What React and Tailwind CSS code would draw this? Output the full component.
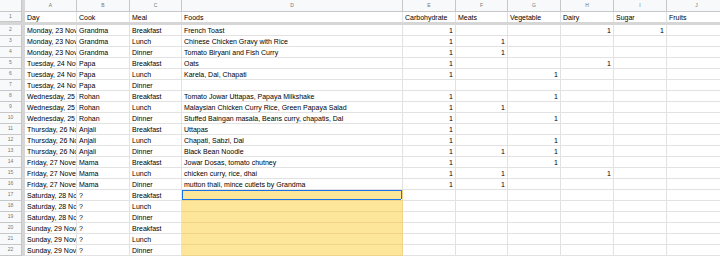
import React from "react";

const COLS = [
  { l: "A", w: 52 },
  { l: "B", w: 53 },
  { l: "C", w: 52 },
  { l: "D", w: 221 },
  { l: "E", w: 53 },
  { l: "F", w: 52 },
  { l: "G", w: 53 },
  { l: "H", w: 53 },
  { l: "I", w: 53 },
  { l: "J", w: 60 },
];

const header = ["Day", "Cook", "Meal", "Foods", "Carbohydrate", "Meats", "Vegetable", "Dairy", "Sugar", "Fruits"];

const rows = [
  ["Monday, 23 November", "Grandma", "Breakfast", "French Toast", 1, 0, 0, 1, 1, 0],
  ["Monday, 23 November", "Grandma", "Lunch", "Chinese Chicken Gravy with Rice", 1, 1, 0, 0, 0, 0],
  ["Monday, 23 November", "Grandma", "Dinner", "Tomato Biryani and Fish Curry", 1, 1, 0, 0, 0, 0],
  ["Tuesday, 24 November", "Papa", "Breakfast", "Oats", 1, 0, 0, 1, 0, 0],
  ["Tuesday, 24 November", "Papa", "Lunch", "Karela, Dal, Chapati", 1, 0, 1, 0, 0, 0],
  ["Tuesday, 24 November", "Papa", "Dinner", "", 0, 0, 0, 0, 0, 0],
  ["Wednesday, 25 November", "Rohan", "Breakfast", "Tomato Jowar Uttapas, Papaya Milkshake", 1, 0, 1, 0, 0, 1],
  ["Wednesday, 25 November", "Rohan", "Lunch", "Malaysian Chicken Curry Rice, Green Papaya Salad", 1, 1, 0, 0, 0, 1],
  ["Wednesday, 25 November", "Rohan", "Dinner", "Stuffed Baingan masala, Beans curry, chapatis, Dal", 1, 0, 1, 0, 0, 0],
  ["Thursday, 26 November", "Anjali", "Breakfast", "Uttapas", 1, 0, 0, 0, 0, 0],
  ["Thursday, 26 November", "Anjali", "Lunch", "Chapati, Sabzi, Dal", 1, 0, 1, 0, 0, 0],
  ["Thursday, 26 November", "Anjali", "Dinner", "Black Bean Noodle", 1, 1, 1, 0, 0, 0],
  ["Friday, 27 November", "Mama", "Breakfast", "Jowar Dosas, tomato chutney", 1, 0, 1, 0, 0, 0],
  ["Friday, 27 November", "Mama", "Lunch", "chicken curry, rice, dhai", 1, 1, 0, 1, 0, 0],
  ["Friday, 27 November", "Mama", "Dinner", "mutton thali, mince cutlets by Grandma", 1, 1, 0, 0, 0, 0],
  ["Saturday, 28 November", "?", "Breakfast", null],
  ["Saturday, 28 November", "?", "Lunch", null],
  ["Saturday, 28 November", "?", "Dinner", null],
  ["Sunday, 29 November", "?", "Breakfast", null],
  ["Sunday, 29 November", "?", "Lunch", null],
  ["Sunday, 29 November", "?", "Dinner", null],
];

function RowHead({ n, h }) {
  return (
    <div
      className="w-[22px] shrink-0 bg-[#f8f9fa] border-b border-r border-[#c7c7c7] flex items-center justify-center text-[5px] text-[#777]"
      style={{ height: h }}
    >
      {n}
    </div>
  );
}

function Frozen({ h }) {
  return <div className="w-[3px] shrink-0 bg-[#d6d6d6]" style={{ height: h }} />;
}

export default function App() {
  return (
    <div className="w-[720px] h-[257px] overflow-hidden bg-white font-['Liberation_Sans',Arial,sans-serif] text-black">
      {/* column header */}
      <div className="flex h-[12px]">
        <div className="w-[22px] shrink-0 h-[12px] bg-[#f8f9fa] border-b border-r border-[#c7c7c7]" />
        <Frozen h={12} />
        {COLS.map((c) => (
          <div
            key={c.l}
            className="shrink-0 h-[12px] bg-[#f8f9fa] border-b border-r border-[#c7c7c7] flex items-center justify-center text-[5px] text-[#777]"
            style={{ width: c.w }}
          >
            {c.l}
          </div>
        ))}
      </div>
      {/* row 1 */}
      <div className="flex h-[10px]">
        <RowHead n={1} h={10} />
        <Frozen h={10} />
        {header.map((t, i) => (
          <div
            key={i}
            className="shrink-0 h-[10px] border-r border-[#e2e2e2] flex items-center pl-[2px] text-[7px] leading-none whitespace-nowrap overflow-hidden"
            style={{ width: COLS[i].w }}
          >
            {t}
          </div>
        ))}
      </div>
      <div className="flex h-[3px]">
        <div className="w-[22px] shrink-0 h-[3px] bg-[#d6d6d6]" />
        <div className="flex-1 h-[3px] bg-[#d6d6d6]" />
      </div>
      {rows.map((r, ri) => {
        const rowNum = ri + 2;
        const yellow = r[3] === null;
        return (
          <div key={ri} className="flex h-[11px]">
            <RowHead n={rowNum} h={11} />
            <Frozen h={11} />
            {COLS.map((c, ci) => {
              const v = r[ci];
              const isNum = ci >= 4;
              const isD = ci === 3;
              const selected = rowNum === 17 && isD;
              return (
                <div
                  key={ci}
                  className={
                    "relative shrink-0 h-[11px] border-b border-r flex items-center text-[7px] leading-none whitespace-nowrap " +
                    (isD && yellow ? "bg-[#fde59a] border-[#f1d487] " : "border-[#e2e2e2] ") +
                    (isNum ? "justify-end pr-[2px]" : "pl-[2px] overflow-hidden")
                  }
                  style={{ width: c.w }}
                >
                  {isNum ? (v ? "1" : "") : v || ""}
                  {selected && (
                    <>
                      <div className="absolute left-[-1px] top-[-1px] right-[-1px] bottom-[-1px] border-[2px] border-[#1a73e8]" />
                      <div className="absolute right-[-3px] bottom-[-3px] w-[4px] h-[4px] bg-[#1a73e8] border border-white" />
                    </>
                  )}
                </div>
              );
            })}
          </div>
        );
      })}
    </div>
  );
}
